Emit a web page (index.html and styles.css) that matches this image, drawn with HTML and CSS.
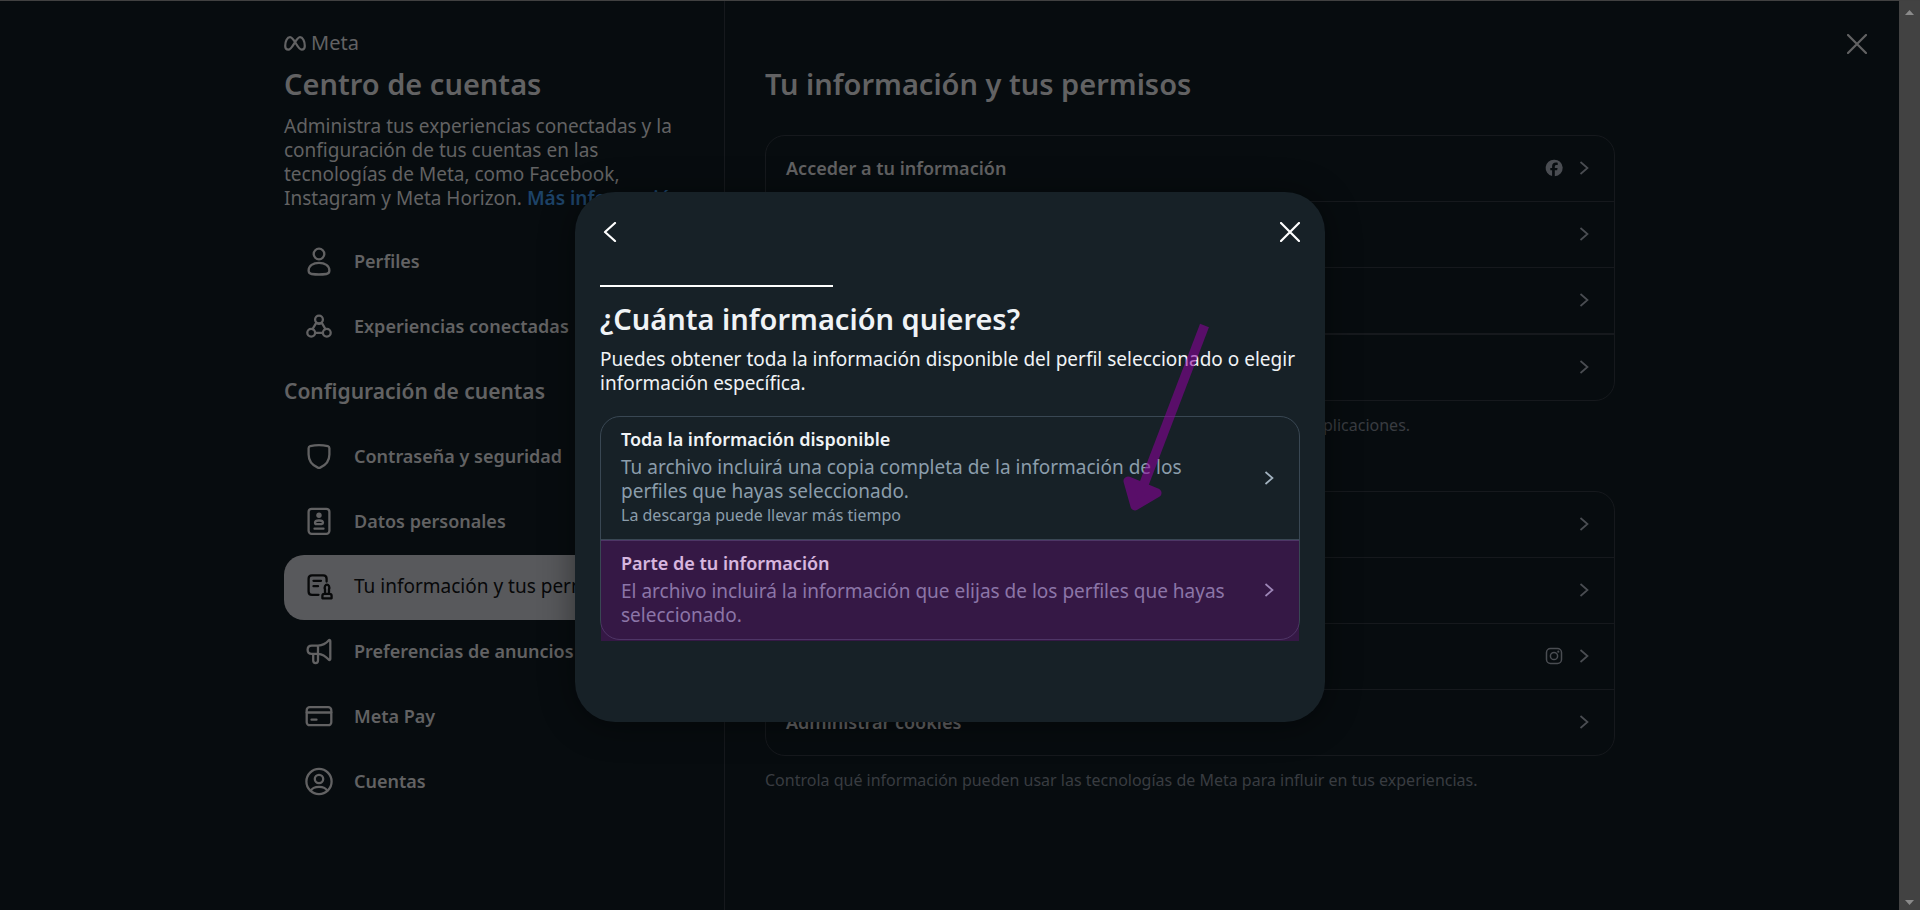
FILE: index.html
```html
<!DOCTYPE html>
<html lang="es">
<head>
<meta charset="utf-8">
<meta name="viewport" content="width=device-width, initial-scale=1">
<title>Centro de cuentas</title>
<link rel="stylesheet" href="styles.css">
</head>
<body>
<svg class="defs" aria-hidden="true">
  <symbol id="chevron" viewBox="0 0 20 20"><path d="M6.500 4 13.500 10 6.500 16" fill="none" stroke="currentColor" stroke-width="1.700"/></symbol>
  <symbol id="cross" viewBox="0 0 20 20"><path d="M1 1 19 19M19 1 1 19" fill="none" stroke="currentColor" stroke-width="2.200" stroke-linecap="round"/></symbol>
</svg>
<div class="page">
  <div class="layout">
    <aside class="sidebar">
      <div class="brand">
        <svg class="brand-mark" viewBox="0 0 22 15" aria-hidden="true"><path d="M1.200 10C1.200 5 3.300 1.200 6 1.200 10.300 1.200 13.500 13.700 17.700 13.700 19.900 13.700 20.800 12.200 20.800 10 20.800 5 18.700 1.200 16 1.200 12 1.200 8.500 13.700 4.300 13.700 2.200 13.700 1.200 12.200 1.200 10Z"/></svg>
        <span>Meta</span>
      </div>
      <h1 class="title">Centro de cuentas</h1>
      <p class="intro">Administra tus experiencias conectadas y la configuración de tus cuentas en las tecnologías de Meta, como Facebook, Instagram y Meta Horizon. <a class="more" href="#">Más información</a></p>
      <nav class="nav">
        <a class="nav-item" href="#">
          <svg class="nav-icon" viewBox="0 0 30 30" aria-hidden="true"><circle cx="15" cy="8" r="5.300"/><path d="M15 16.800c6 0 10.400 3 10.400 7.700 0 2.600-1 3.200-3 3.500-4.500.6-10.300.6-14.800 0-2-.3-3-.9-3-3.500 0-4.700 4.400-7.700 10.400-7.700z"/></svg>
          <span>Perfiles</span></a>
        <a class="nav-item" href="#">
          <svg class="nav-icon" viewBox="0 0 30 30" aria-hidden="true"><circle cx="15" cy="8.500" r="3.900"/><circle cx="7.200" cy="21.800" r="3.900"/><circle cx="22.800" cy="21.800" r="3.900"/><path d="M12.200 11.800 8.600 18M17.800 11.800 21.400 18M11.200 21.800h7.600M12.800 12.300c1.300.7 3.100.7 4.400 0"/></svg>
          <span>Experiencias conectadas</span></a>
        <h2 class="nav-heading">Configuración de cuentas</h2>
        <a class="nav-item" href="#">
          <svg class="nav-icon" viewBox="0 0 30 30" aria-hidden="true"><path d="M4.600 7.200c0-1.100.6-1.700 1.600-2 5.600-1.300 12-1.300 17.600 0 1 .3 1.600.9 1.600 2v6.300c0 6.500-4.400 11-9.200 13.100-.8.400-1.600.4-2.400 0-4.800-2.100-9.200-6.600-9.200-13.100z"/></svg>
          <span>Contraseña y seguridad</span></a>
        <a class="nav-item" href="#">
          <svg class="nav-icon" viewBox="0 0 30 30" aria-hidden="true"><rect x="4.600" y="2.800" width="20.800" height="25" rx="3"/><circle class="solid" cx="15" cy="9.300" r="2.700"/><path d="M15 14.500c2.600 0 4 1 4 2.300 0 1-.5 1.300-1.500 1.400h-5c-1 0-1.500-.4-1.500-1.400 0-1.300 1.400-2.300 4-2.300zM10.500 22.700h9"/></svg>
          <span>Datos personales</span></a>
        <a class="nav-item selected" href="#" aria-current="page">
          <svg class="nav-icon" viewBox="0 0 30 30" aria-hidden="true"><path d="M22.600 10.500V7.800c0-2.200-1-3.400-3.300-3.400H8c-2.300 0-3.400 1.200-3.400 3.400v12.600c0 2.300 1.100 3.400 3.400 3.400h6.500M9.500 9.800h7.500M9.500 15.200h4.500"/><path d="M18.400 27.300v-2.500c0-1.300.7-2 2-2h5.200c1.300 0 2 .7 2 2v2.500zM21 22.500v-4c-1-3 .5-4.800 2-4.800s3 1.800 2 4.800v4"/></svg>
          <span>Tu información y tus permisos</span></a>
        <a class="nav-item" href="#">
          <svg class="nav-icon" viewBox="0 0 30 30" aria-hidden="true"><path d="M14 9.600H7.800c-2.500 0-4.200 1.700-4.200 4.100s1.700 4.100 4.200 4.100H14zM14 9.600c4.500-.4 8-2.200 10.600-5.200.8-.9 1.700-.5 1.700.6v18c0 1.100-.9 1.500-1.700.6-2.600-3-6.100-5.400-10.600-5.800M9.200 18v6.600c0 3.300 4.800 3.300 4.800 0V18"/></svg>
          <span>Preferencias de anuncios</span></a>
        <a class="nav-item" href="#">
          <svg class="nav-icon" viewBox="0 0 30 30" aria-hidden="true"><rect x="2.700" y="6.200" width="24.600" height="18" rx="3"/><path d="M2.700 11.500h24.600M7.500 18.700h5"/></svg>
          <span>Meta Pay</span></a>
        <a class="nav-item" href="#">
          <svg class="nav-icon" viewBox="0 0 30 30" aria-hidden="true"><circle cx="15" cy="15.500" r="12.600"/><circle cx="15" cy="13" r="4.200"/><path d="M6.800 24.800c1.200-2.600 4.300-4 8.200-4s7 1.400 8.200 4"/></svg>
          <span>Cuentas</span></a>
      </nav>
    </aside>
    <main class="main">
      <h2 class="title">Tu información y tus permisos</h2>
      <div class="card">
        <a class="row" href="#"><span class="row-label">Acceder a tu información</span>
          <svg class="icon" viewBox="0 0 20 20" role="img" aria-label="Facebook"><path fill="currentColor" fill-rule="evenodd" d="M10 1.700a8.300 8.300 0 0 0-1.900 16.400v-5.800H6.300V9.900h1.800V8.500c0-2.800 1.300-4 3.900-4 .5 0 1.300.1 1.700.2v2.300c-.2 0-.6 0-1 0-1.400 0-1.900.5-1.900 1.700v1.200h2.800l-.5 2.400h-2.300v6A8.300 8.300 0 0 0 10 1.700z"/></svg>
          <svg class="icon" aria-hidden="true"><use href="#chevron"/></svg></a>
        <a class="row" href="#" aria-label="Transferir una copia"><svg class="icon" aria-hidden="true"><use href="#chevron"/></svg></a>
        <a class="row" href="#" aria-label="Exportar tu información"><svg class="icon" aria-hidden="true"><use href="#chevron"/></svg></a>
        <a class="row strong-rule" href="#" aria-label="Historial de búsqueda"><svg class="icon" aria-hidden="true"><use href="#chevron"/></svg></a>
      </div>
      <p class="caption">Consulta, descarga o transfiere tu información y tu actividad en nuestras aplicaciones.</p>
      <div class="card second">
        <a class="row" href="#" aria-label="Actividad"><svg class="icon" aria-hidden="true"><use href="#chevron"/></svg></a>
        <a class="row" href="#" aria-label="Contactos"><svg class="icon" aria-hidden="true"><use href="#chevron"/></svg></a>
        <a class="row" href="#" aria-label="Aplicaciones">
          <svg class="icon" viewBox="0 0 20 20" role="img" aria-label="Instagram"><g fill="none" stroke="currentColor" stroke-width="1.500"><rect x="2.500" y="2.500" width="15" height="15" rx="4"/><circle cx="10" cy="10" r="3.600"/></g><circle cx="14.300" cy="5.700" r="1.100" fill="currentColor"/></svg>
          <svg class="icon" aria-hidden="true"><use href="#chevron"/></svg></a>
        <a class="row" href="#"><span class="row-label">Administrar cookies</span><svg class="icon" aria-hidden="true"><use href="#chevron"/></svg></a>
      </div>
      <p class="caption">Controla qué información pueden usar las tecnologías de Meta para influir en tus experiencias.</p>
    </main>
  </div>
  <div class="scrollbar" aria-hidden="true">
    <svg class="scroll-arrow" viewBox="0 0 9 5"><path d="M0 5 4.500 0 9 5z"/></svg>
    <svg class="scroll-arrow" viewBox="0 0 9 5"><path d="M0 0 4.500 5 9 0z"/></svg>
  </div>
  <button class="icon-button page-close" type="button" aria-label="Cerrar"><svg class="icon" aria-hidden="true"><use href="#cross"/></svg></button>

  <div class="overlay">
    <section class="modal" role="dialog" aria-modal="true" aria-labelledby="modal-title">
      <header class="modal-bar">
        <button class="icon-button" type="button" aria-label="Atrás"><svg class="icon" viewBox="0 0 20 20" aria-hidden="true"><path d="M15 1 5 10 15 19" fill="none" stroke="currentColor" stroke-width="2.200" stroke-linecap="round" stroke-linejoin="round"/></svg></button>
        <button class="icon-button" type="button" aria-label="Cerrar"><svg class="icon" aria-hidden="true"><use href="#cross"/></svg></button>
      </header>
      <div class="progress"></div>
      <h2 class="modal-title" id="modal-title">¿Cuánta información quieres?</h2>
      <p class="modal-text">Puedes obtener toda la información disponible del perfil seleccionado o elegir información específica.</p>
      <div class="options">
        <button class="option" type="button">
          <span class="option-body">
            <span class="option-title">Toda la información disponible</span>
            <span class="option-text">Tu archivo incluirá una copia completa de la información de los perfiles que hayas seleccionado.</span>
            <span class="option-note">La descarga puede llevar más tiempo</span>
          </span>
          <svg class="icon" aria-hidden="true"><use href="#chevron"/></svg>
        </button>
        <button class="option marked" type="button">
          <span class="option-body">
            <span class="option-title">Parte de tu información</span>
            <span class="option-text">El archivo incluirá la información que elijas de los perfiles que hayas seleccionado.</span>
          </span>
          <svg class="icon" aria-hidden="true"><use href="#chevron"/></svg>
        </button>
      </div>
      <svg class="pointer" viewBox="0 0 92 192" aria-hidden="true"><g opacity=".55"><path d="M81.500 3.500 21 162" fill="none" stroke="#8f00a0" stroke-width="9.500"/><path d="M5 159 34 171 12 184z" fill="#8f00a0" stroke="#8f00a0" stroke-width="9" stroke-linejoin="round"/></g></svg>
    </section>
  </div>
</div>
</body>
</html>
```
FILE: styles.css
```css
:root {
  --page: #070c0f;
  --rule: #16191d;
  --text: #626263;
  --muted: #393c41;
  --modal: #172127;
  --modal-rule: #394753;
}

* { box-sizing: border-box; }

body {
  margin: 0;
  background: var(--page);
  color: var(--text);
  font: 400 19px/24px "Noto Sans", "Open Sans", sans-serif;
}

h1, h2, p { margin: 0; }
a { color: inherit; text-decoration: none; }
.defs { display: none; }

.page {
  position: relative;
  display: flex;
  min-height: 100vh;
  border-top: 1px solid #414141;
}

.layout {
  display: flex;
  flex: 1;
  max-width: 1331px;
  margin: 0 auto;
}

.sidebar {
  flex: 0 0 441px;
  padding: 27px 20px 40px 0;
  border-right: 1px solid var(--rule);
}

.brand {
  display: flex;
  align-items: center;
  gap: 5px;
  height: 30px;
  margin-bottom: 8px;
  font-size: 20px;
}

.brand-mark {
  width: 22px;
  height: 15px;
  fill: none;
  stroke: currentColor;
  stroke-width: 2.2;
}

.title {
  font-size: 29px;
  font-weight: 600;
  line-height: 36px;
}

.intro { max-width: 400px; margin: 12px 0 20px; }
.more { color: #1d4368; font-weight: 600; }

.nav-item {
  display: flex;
  align-items: center;
  gap: 20px;
  height: 65px;
  padding: 0 20px 4px;
  border-radius: 20px;
  font-size: 18px;
  font-weight: 600;
  white-space: nowrap;
}

.nav-item.selected {
  background: #58595c;
  color: #070809;
  font-size: 19px;
  font-weight: 400;
}

.nav-icon {
  flex: none;
  width: 30px;
  height: 30px;
  fill: none;
  stroke: currentColor;
  stroke-width: 2.3;
  stroke-linecap: round;
  stroke-linejoin: round;
}

.nav-icon .solid { fill: currentColor; stroke: none; }

.nav-heading {
  height: 65px;
  font-size: 21px;
  font-weight: 600;
  line-height: 62px;
}

.main {
  flex: 1;
  min-width: 0;
  padding: 65px 0 40px 40px;
}

.card {
  margin-top: 33px;
  border: 1px solid var(--rule);
  border-radius: 20px;
}

.card.second { margin-top: 57px; }

.row {
  display: flex;
  align-items: center;
  justify-content: flex-end;
  gap: 10px;
  min-height: 65px;
  padding: 0 20px 2px;
  color: #4a4d52;
}

.row + .row { border-top: 1px solid var(--rule); min-height: 66px; }
.row + .row.strong-rule { border-top-width: 2px; min-height: 67px; }

.row-label {
  flex: 1;
  color: var(--text);
  font-size: 18px;
  font-weight: 600;
}

.caption {
  margin-top: 14px;
  color: var(--muted);
  font-size: 16px;
  line-height: 20px;
}

.card.second { margin-top: 56px; }

.icon { flex: none; display: block; width: 20px; height: 20px; }

.icon-button {
  padding: 0;
  border: 0;
  background: none;
  color: inherit;
  cursor: pointer;
}

.page-close { position: absolute; top: 33px; right: 53px; }

.scrollbar {
  display: flex;
  flex: none;
  flex-direction: column;
  align-items: center;
  justify-content: space-between;
  width: 21px;
  padding: 9px 0 5px;
  background: #424242;
}

.scroll-arrow { width: 9px; height: 5px; fill: #8a8a8a; }

.overlay {
  position: absolute;
  inset: 0 20px 0 0;
  display: flex;
  align-items: center;
  justify-content: center;
  padding-top: 2px;
  pointer-events: none;
}

.modal {
  position: relative;
  width: 750px;
  max-width: 100%;
  padding: 0 25px 82px;
  border-radius: 40px;
  background: var(--modal);
  box-shadow: 0 3px 35px rgba(0, 0, 0, .45);
  color: #f0f3f6;
  pointer-events: auto;
}

.modal-bar {
  display: flex;
  align-items: center;
  justify-content: space-between;
  height: 80px;
  color: #fff;
}

.progress {
  width: 233px;
  height: 2px;
  margin: 13px 0 14px;
  background: #fff;
}

.modal-title {
  font-size: 29px;
  font-weight: 600;
  line-height: 36px;
}

.modal-text { margin: 10px 0 21px; color: #f0f3f6; }

.options {
  border: 1px solid var(--modal-rule);
  border-radius: 20px;
}

.option {
  position: relative;
  display: flex;
  align-items: center;
  gap: 20px;
  width: 100%;
  padding: 0 20px;
  border: 0;
  background: none;
  color: #a3b3c0;
  font: inherit;
  text-align: left;
  cursor: pointer;
}

.option + .option { border-top: 2px solid var(--modal-rule); }

.option-body {
  display: flex;
  flex: 1;
  flex-direction: column;
  padding: 10px 0 14px;
}

.option + .option .option-body { padding-bottom: 12px; }
.option-title { color: #f0f3f6; font-size: 18px; font-weight: 600; }
.option-text { margin-top: 4px; color: #8b9dab; }

.option-note {
  margin-top: 2px;
  color: #8b9dab;
  font-size: 16px;
  line-height: 20px;
}

.marked::after {
  content: "";
  position: absolute;
  inset: -1px 0 -2px;
  background: rgba(143, 0, 160, .25);
}

.pointer {
  position: absolute;
  top: 130px;
  left: 548px;
  width: 92px;
  height: 192px;
  pointer-events: none;
}
```
